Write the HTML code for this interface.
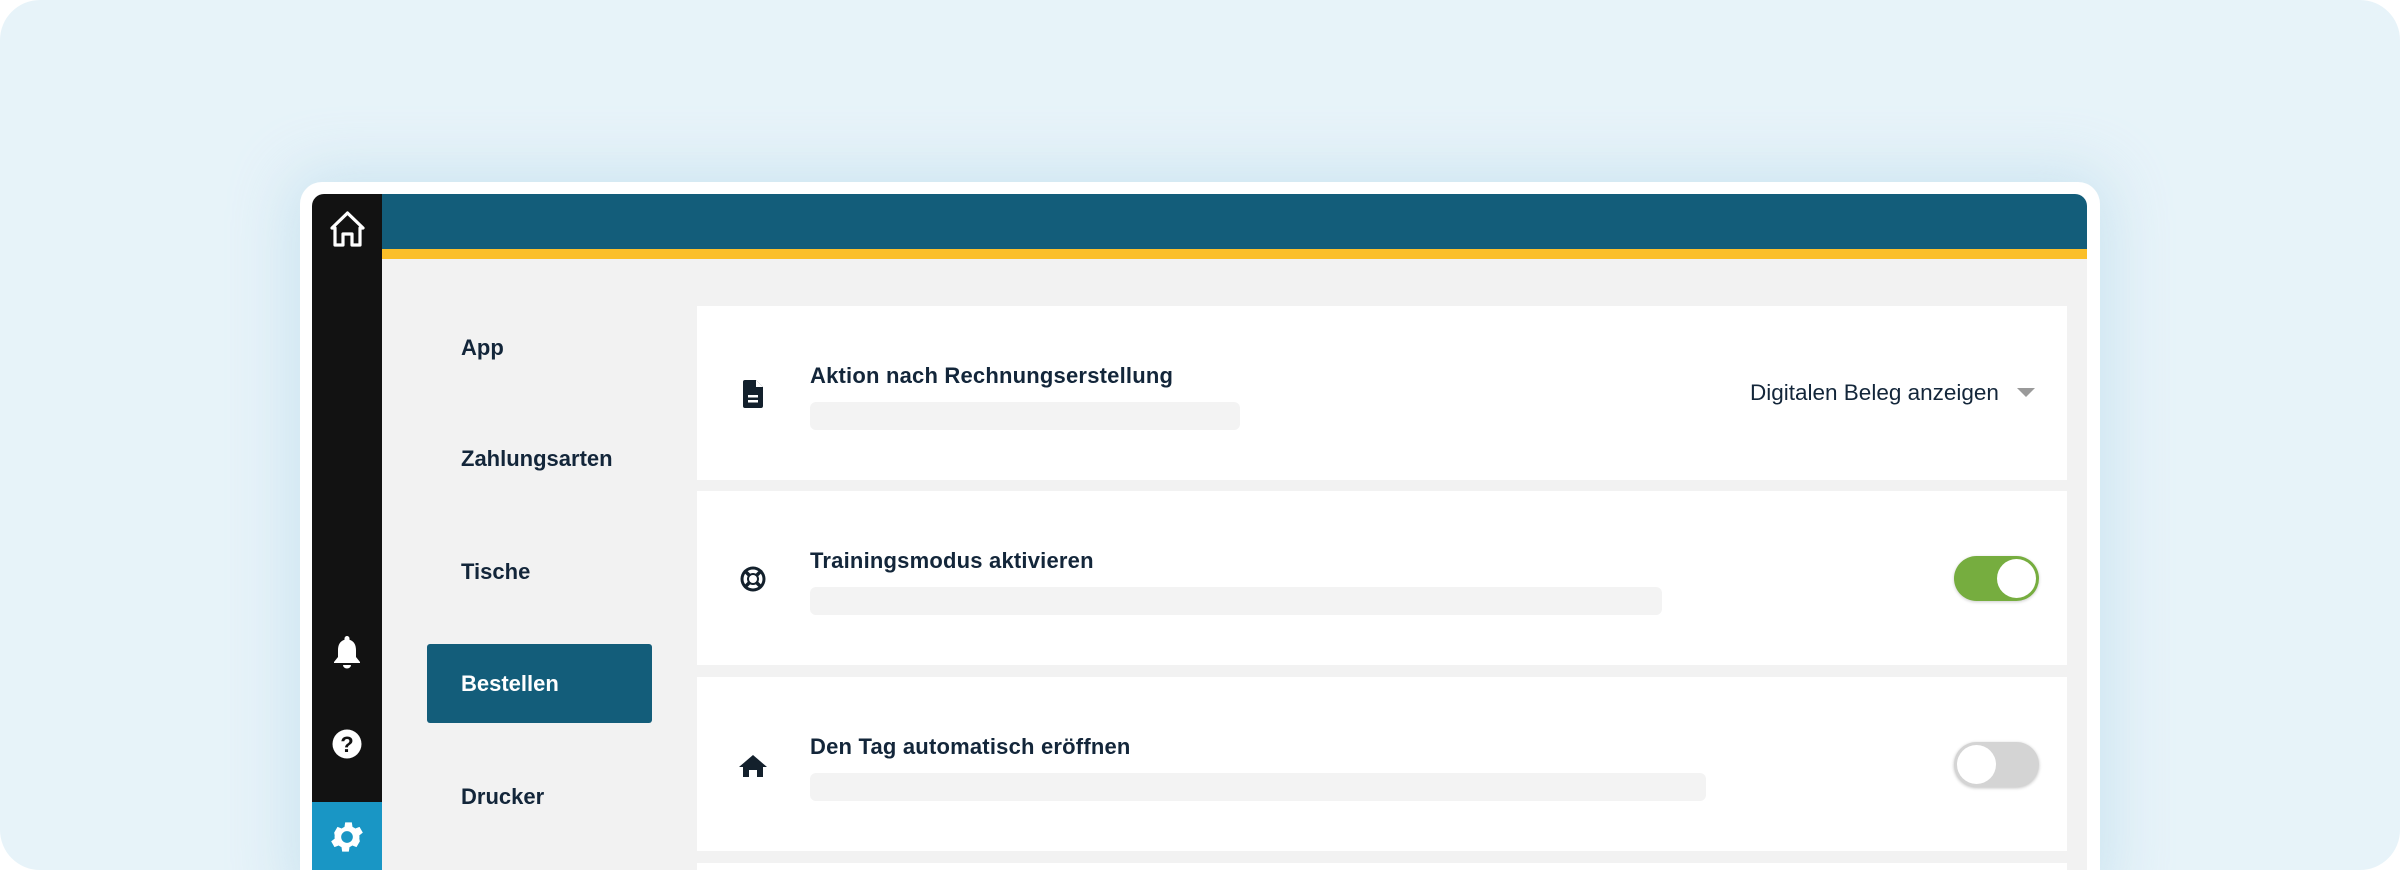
<!DOCTYPE html>
<html><head><meta charset="utf-8"><style>
*{margin:0;padding:0;box-sizing:border-box}
html,body{width:2400px;height:870px;background:#fff;overflow:hidden;font-family:"Liberation Sans",sans-serif;color:#13263a}
.wrap{position:relative;width:2400px;height:870px;overflow:hidden;border-radius:40px;background:#e7f3f9}
.frame{position:absolute;left:300px;top:182px;width:1800px;height:720px;background:#fff;border-radius:22px;box-shadow:0 0 60px 10px rgba(170,210,230,.45)}
.app{position:absolute;left:312px;top:194px;width:1775px;height:700px;background:#f2f2f2;border-radius:12px 12px 0 0;overflow:hidden}
.side{position:absolute;left:0;top:0;width:70px;height:700px;background:#121212}
.gearbg{position:absolute;left:0;top:608px;width:70px;height:100px;background:#1996c5}
.head{position:absolute;left:70px;top:0;right:0;height:55px;background:#135d7a}
.yel{position:absolute;left:70px;top:55px;right:0;height:10px;background:#fbbf2a}
.nav{position:absolute;left:149px;font-size:22px;font-weight:bold;color:#13263a;line-height:30px}
.sel{position:absolute;left:115px;top:450px;width:225px;height:79px;background:#135d7a;border-radius:3px}
.card{position:absolute;left:385px;width:1370px;height:174px;background:#fff}
.title{position:absolute;left:113px;top:55px;font-size:22px;font-weight:bold;line-height:30px;letter-spacing:.2px}
.bar{position:absolute;left:113px;top:96px;height:28px;background:#f3f3f3;border-radius:6px}
.ico{position:absolute;left:41px;top:73px;width:30px;height:30px}
.tog{position:absolute;left:1257px;top:65px;width:85px;height:45px;border-radius:23px}
.knob{position:absolute;top:3px;width:39px;height:39px;border-radius:50%;background:#fff}
</style></head><body>
<div class="wrap">
<div class="frame"></div>
<div class="app">
 <div class="side">
  <svg style="position:absolute;left:15px;top:14px" width="41" height="41" viewBox="0 0 41 41"><path d="M5 20 L20.5 5 L36 20 L33 20 L33 37 L25 37 L25 26 L16 26 L16 37 L8 37 L8 20 Z" fill="none" stroke="#fff" stroke-width="3.2" stroke-linejoin="round"/></svg>
  <svg style="position:absolute;left:20px;top:440px" width="30" height="36" viewBox="0 0 30 36"><path d="M15 2 a2.5 2.5 0 0 1 2.5 2.5 v1.2 C22 7 24 11 24 16 v7 l4 5 v1 H2 v-1 l4-5 v-7 C6 11 8 7 12.5 5.7 V4.5 A2.5 2.5 0 0 1 15 2z M11 31 h8 a4 3.5 0 0 1 -8 0z" fill="#fff"/></svg>
  <svg style="position:absolute;left:20px;top:535px" width="30" height="30" viewBox="0 0 30 30"><circle cx="15" cy="15" r="14.5" fill="#fff"/><text x="15" y="23" text-anchor="middle" font-family="Liberation Sans" font-weight="bold" font-size="22" fill="#121212">?</text></svg>
  <div class="gearbg"></div>
  <svg style="position:absolute;left:15px;top:623px" width="40" height="40" viewBox="0 0 24 24"><path fill="#fff" d="M19.4 13a7.5 7.5 0 0 0 0-2l2.1-1.6-2-3.5-2.5 1a7.6 7.6 0 0 0-1.7-1l-.4-2.7h-4l-.4 2.7a7.6 7.6 0 0 0-1.7 1l-2.5-1-2 3.5L4.6 11a7.5 7.5 0 0 0 0 2l-2.1 1.6 2 3.5 2.5-1a7.6 7.6 0 0 0 1.7 1l.4 2.7h4l.4-2.7a7.6 7.6 0 0 0 1.7-1l2.5 1 2-3.5zM12 15.5A3.5 3.5 0 1 1 12 8.5a3.5 3.5 0 0 1 0 7z"/></svg>
 </div>
 <div class="head"></div><div class="yel"></div>
 <div class="nav" style="top:139px">App</div>
 <div class="nav" style="top:250px">Zahlungsarten</div>
 <div class="nav" style="top:363px">Tische</div>
 <div class="sel"></div>
 <div class="nav" style="top:475px;color:#fff">Bestellen</div>
 <div class="nav" style="top:588px">Drucker</div>

 <div class="card" style="top:112px">
  <svg class="ico" viewBox="0 0 30 30"><path d="M7 1 h11 l7 7 v19 a2 2 0 0 1-2 2 H7 a2 2 0 0 1-2-2 V3 a2 2 0 0 1 2-2z" fill="#13202c"/><path d="M18 1 v7 h7z" fill="#fff"/><rect x="10" y="16" width="10" height="2.5" fill="#fff"/><rect x="10" y="21" width="10" height="2.5" fill="#fff"/></svg>
  <div class="title">Aktion nach Rechnungserstellung</div>
  <div class="bar" style="width:430px"></div>
  <div style="position:absolute;left:1053px;top:72px;font-size:22.5px;line-height:30px">Digitalen Beleg anzeigen</div>
  <svg style="position:absolute;left:1320px;top:82px" width="18" height="10"><path d="M0 0 H18 L9 9z" fill="#9a9a9a"/></svg>
 </div>
 <div class="card" style="top:297px">
  <svg class="ico" viewBox="0 0 30 30"><circle cx="15" cy="15" r="12.5" fill="#13202c"/><circle cx="15" cy="15" r="9.5" fill="#fff"/><circle cx="15" cy="15" r="6" fill="#13202c"/><circle cx="15" cy="15" r="4" fill="#fff"/><g stroke="#13202c" stroke-width="3.5"><path d="M8 8 l4 4 M22 8 l-4 4 M8 22 l4-4 M22 22 l-4-4"/></g></svg>
  <div class="title">Trainingsmodus aktivieren</div>
  <div class="bar" style="width:852px"></div>
  <div class="tog" style="background:#76ad3f;box-shadow:0 1px 3px rgba(0,0,0,.2)"><div class="knob" style="left:43px"></div></div>
 </div>
 <div class="card" style="top:483px">
  <svg class="ico" viewBox="0 0 30 30"><path d="M15 5 L29 17 H25 V27 H19 V20 H11 V27 H5 V17 H1 Z" fill="#13202c"/></svg>
  <div class="title">Den Tag automatisch eröffnen</div>
  <div class="bar" style="width:896px"></div>
  <div class="tog" style="background:#d4d4d4;box-shadow:0 1px 3px rgba(0,0,0,.25)"><div class="knob" style="left:3px"></div></div>
 </div>
 <div class="card" style="top:669px"></div>
</div>
</div>
</body></html>
